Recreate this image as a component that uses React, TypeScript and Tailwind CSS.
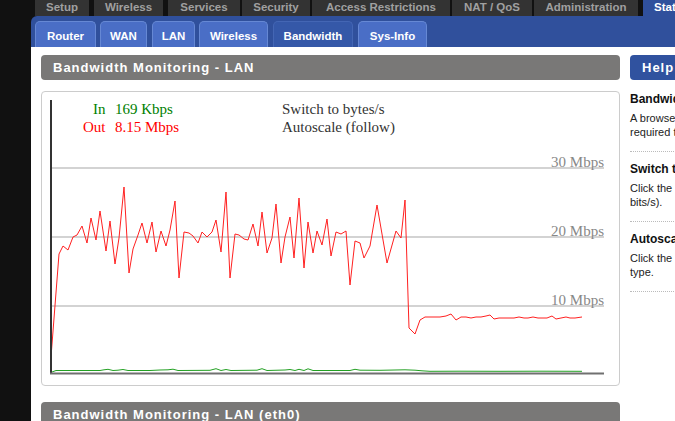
import React from "react";

const topTabs: { label: string; w: number; ml: number; active?: boolean }[] = [
  { label: "Setup", w: 54, ml: 35 },
  { label: "Wireless", w: 69, ml: 5 },
  { label: "Services", w: 72, ml: 5 },
  { label: "Security", w: 68, ml: 2 },
  { label: "Access Restrictions", w: 138, ml: 2 },
  { label: "NAT / QoS", w: 80, ml: 2 },
  { label: "Administration", w: 104, ml: 2 },
  { label: "Status", w: 70, ml: 5, active: true },
];

const subTabs: { label: string; w: number; ml: number; active?: boolean }[] = [
  { label: "Router", w: 61, ml: 4 },
  { label: "WAN", w: 47, ml: 4 },
  { label: "LAN", w: 43, ml: 5 },
  { label: "Wireless", w: 69, ml: 4 },
  { label: "Bandwidth", w: 80, ml: 5, active: true },
  { label: "Sys-Info", w: 69, ml: 5 },
];

const redPts =
  "51,357 59,254 63,246 68,250 73,237 77,235 82,226 87,243 91,218 96,240 100,211 106,251 110,221 115,264 119,238 124,187 129,273 133,249 138,235 142,223 147,243 152,222 156,252 161,231 166,246 170,230 175,201 179,278 184,232 189,233 193,236 198,243 202,232 207,237 212,232 216,220 221,252 226,192 230,278 235,234 239,235 244,239 248,240 253,224 258,246 262,212 267,253 272,238 276,204 281,263 285,237 290,217 294,258 299,198 304,268 308,222 313,253 317,231 322,245 327,219 331,256 336,232 341,234 346,231 350,285 355,241 360,243 364,258 370,246 377,205 387,263 396,231 401,238 405,200 409,328 415,334 420,320 425,317 430,317 435,317 440,317 446,316 451,314 456,320 461,317 466,317 471,318 476,317 481,317 486,316 490,315 494,319 499,318 504,318 509,318 514,318 519,317 524,318 528,318 533,317 538,318 542,318 547,318 552,316 556,319 561,318 566,317 570,318 575,318 582,317";

const greenPts =
  "52,372 56,370.5 70,370.5 100,370.5 104,369.8 108,369.3 113,370.5 118,370.2 123,369.5 128,370.5 150,370.5 160,370 168,369.8 173,369.2 178,370.5 210,370.3 216,368.7 221,370.5 226,369.5 231,370.5 257,370.2 262,368.7 267,370.5 285,370 290,369.5 295,370.5 299,369.3 304,370.5 308,368.8 313,370.5 330,370.5 350,370.5 355,369.3 360,370.2 380,370.3 405,369.8 415,370.2 422,370.8 430,371.3 460,371.2 500,371.3 540,371.2 582,371.3";

const helpItems = [
  {
    term: "Bandwidth Monitoring",
    lines: ["A browser which supports SVG is", "required to display the graphs."],
  },
  {
    term: "Switch to bytes/s",
    lines: ["Click the link to switch the unit (bytes/s or", "bits/s)."],
  },
  {
    term: "Autoscale",
    lines: ["Click the link to change the autoscale", "type."],
  },
];

function Chart() {
  return (
    <svg width={577} height={293} viewBox="42 92 577 293" className="block">
      <g fontFamily="'Liberation Serif', 'Times New Roman', serif" fontSize="15">
        <text x="105.5" y="114" textAnchor="end" fill="#008000">In</text>
        <text x="115" y="114" fill="#008000">169 Kbps</text>
        <text x="105.5" y="131.5" textAnchor="end" fill="#ff0000">Out</text>
        <text x="115" y="131.5" fill="#ff0000">8.15 Mbps</text>
        <text x="282" y="114" fill="#333">Switch to bytes/s</text>
        <text x="282" y="131.5" fill="#333">Autoscale (follow)</text>
      </g>
      <g stroke="#c4c4c4" strokeWidth="1.5">
        <line x1="52" y1="168" x2="604" y2="168" />
        <line x1="52" y1="237" x2="604" y2="237" />
        <line x1="52" y1="306" x2="604" y2="306" />
      </g>
      <g fontFamily="'Liberation Serif', 'Times New Roman', serif" fontSize="15" fill="#888" textAnchor="end">
        <text x="604" y="166.5">30 Mbps</text>
        <text x="604" y="235.5">20 Mbps</text>
        <text x="604" y="304.5">10 Mbps</text>
      </g>
      <polyline points={greenPts} fill="none" stroke="#22a022" strokeWidth="1" />
      <polyline points={redPts} fill="none" stroke="#ff2020" strokeWidth="1" />
      <line x1="51" y1="100" x2="51" y2="374" stroke="#333" strokeWidth="2" />
      <line x1="50" y1="373.5" x2="604" y2="373.5" stroke="#707070" strokeWidth="2" />
    </svg>
  );
}

export default function App() {
  return (
    <div className="w-[675px] h-[421px] overflow-hidden bg-[#111111] font-['Liberation_Sans',Arial,sans-serif]">
      <div className="flex h-[16px]">
        {topTabs.map((t) => (
          <div
            key={t.label}
            style={{ width: t.w, marginLeft: t.ml }}
            className={
              t.active
                ? "shrink-0 flex justify-start pl-[11px] bg-[#30509c] text-white text-[11.5px] font-bold leading-[14px] whitespace-nowrap"
                : "shrink-0 flex justify-center bg-[#333333] text-[#a0a0a0] text-[11.5px] font-bold leading-[14px] whitespace-nowrap"
            }
          >
            {t.label}
          </div>
        ))}
      </div>
      <div className="ml-[31px]">
        <div className="h-[31px] bg-[#30509c] rounded-tl-[6px] flex items-end">
          {subTabs.map((t) => (
            <div
              key={t.label}
              style={{ width: t.w, marginLeft: t.ml }}
              className={
                t.active
                  ? "shrink-0 h-[26px] pt-[2px] rounded-t-[5px] border border-b-0 border-[#4466b4] bg-[#3558a8] text-white text-[11.5px] font-bold leading-[24px] text-center whitespace-nowrap"
                  : "shrink-0 h-[26px] pt-[2px] rounded-t-[5px] border border-b-0 border-[#6688d4] bg-[#4a6ec6] text-white text-[11.5px] font-bold leading-[24px] text-center whitespace-nowrap"
              }
            >
              {t.label}
            </div>
          ))}
        </div>
        <div className="bg-white h-[374px] flex pl-[10px] pt-[8px]">
          <main className="w-[579px] shrink-0">
            <div className="h-[25px] rounded-[4px] bg-[#797877] pl-[12px] pt-[1px] text-white text-[13px] font-bold tracking-[1px] leading-[24px] whitespace-nowrap">
              Bandwidth Monitoring - LAN
            </div>
            <div className="mt-[11px] h-[295px] border border-[#cccccc] rounded-[4px] overflow-hidden">
              <Chart />
            </div>
            <div className="mt-[16px] h-[25px] rounded-[4px] bg-[#797877] pl-[12px] pt-[1px] text-white text-[13px] font-bold tracking-[1px] leading-[24px] whitespace-nowrap">
              Bandwidth Monitoring - LAN (eth0)
            </div>
          </main>
          <aside className="ml-[10px] w-[230px] shrink-0">
            <div className="h-[25px] rounded-[4px] bg-[#30529f] pl-[12px] pt-[1px] text-white text-[13px] font-bold tracking-[1px] leading-[24px]">
              Help
            </div>
            <dl className="mt-[2px]">
              {helpItems.map((h) => (
                <div key={h.term} className="pt-[10px] pb-[12px] border-b border-dotted border-[#bbbbbb]">
                  <dt className="text-[12px] font-bold leading-[14px] text-[#111] whitespace-nowrap">{h.term}</dt>
                  <dd className="mt-[5px] text-[11px] leading-[14px] text-[#222]">
                    {h.lines.map((l) => (
                      <div key={l} className="whitespace-nowrap">{l}</div>
                    ))}
                  </dd>
                </div>
              ))}
            </dl>
          </aside>
        </div>
      </div>
    </div>
  );
}
